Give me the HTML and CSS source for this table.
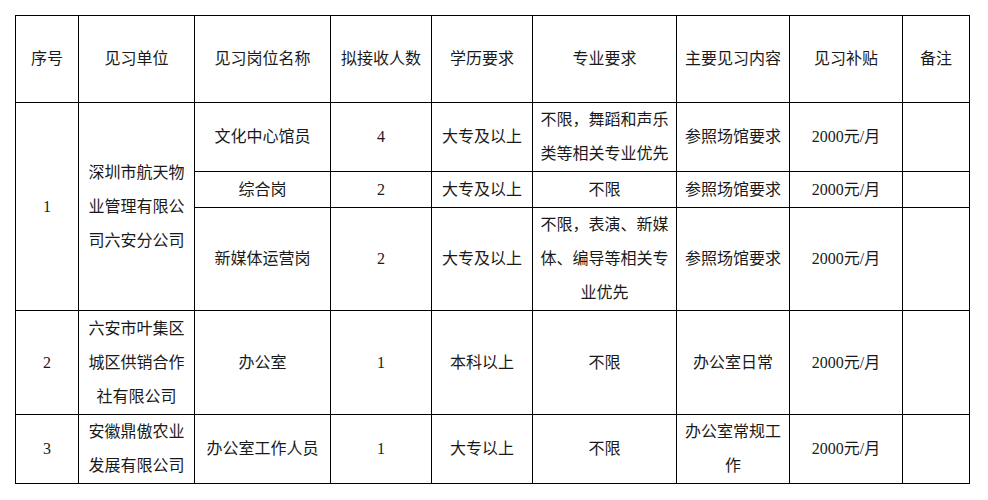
FILE: index.html
```html
<!DOCTYPE html>
<html lang="zh-CN">
<head>
<meta charset="utf-8">
<title>见习岗位</title>
<link rel="stylesheet" href="styles.css">
</head>
<body>
<table class="jobs">
  <colgroup>
    <col class="c1"><col class="c2"><col class="c3"><col class="c4"><col class="c5">
    <col class="c6"><col class="c7"><col class="c8"><col class="c9">
  </colgroup>
  <thead>
    <tr class="r-head">
      <th>序号</th><th>见习单位</th><th>见习岗位名称</th><th>拟接收人数</th><th>学历要求</th>
      <th>专业要求</th><th>主要见习内容</th><th>见习补贴</th><th>备注</th>
    </tr>
  </thead>
  <tbody>
    <tr class="r1a">
      <td rowspan="3">1</td>
      <td rowspan="3">深圳市航天物业管理有限公司六安分公司</td>
      <td>文化中心馆员</td><td>4</td><td>大专及以上</td>
      <td>不限，舞蹈和声乐类等相关专业优先</td><td>参照场馆要求</td><td>2000元/月</td><td></td>
    </tr>
    <tr class="r1b">
      <td>综合岗</td><td>2</td><td>大专及以上</td><td>不限</td><td>参照场馆要求</td><td>2000元/月</td><td></td>
    </tr>
    <tr class="r1c">
      <td>新媒体运营岗</td><td>2</td><td>大专及以上</td>
      <td>不限，表演、新媒体、编导等相关专业优先</td><td>参照场馆要求</td><td>2000元/月</td><td></td>
    </tr>
    <tr class="r2">
      <td>2</td><td>六安市叶集区城区供销合作社有限公司</td><td>办公室</td><td>1</td><td>本科以上</td>
      <td>不限</td><td>办公室日常</td><td>2000元/月</td><td></td>
    </tr>
    <tr class="r3">
      <td>3</td><td>安徽鼎傲农业发展有限公司</td><td>办公室工作人员</td><td>1</td><td>大专以上</td>
      <td>不限</td><td>办公室常规工作</td><td>2000元/月</td><td></td>
    </tr>
  </tbody>
</table>
</body>
</html>
```

FILE: styles.css
```css
html, body {
  margin: 0;
  padding: 0;
  background: #ffffff;
}

body {
  padding: 15px 0 0 15px;
  font-family: "Liberation Serif", "Noto Sans CJK SC", sans-serif;
  font-size: 16px;
  color: #1a1a1a;
}

.jobs {
  border-collapse: collapse;
  table-layout: fixed;
  width: 955px;
}

.jobs th,
.jobs td {
  border: 1px solid #000;
  padding: 0 3px;
  text-align: center;
  vertical-align: middle;
  line-height: 34px;
  font-weight: normal;
  overflow: hidden;
}

.c1 { width: 63px; }
.c2 { width: 116px; }
.c3 { width: 136px; }
.c4 { width: 101px; }
.c5 { width: 101px; }
.c6 { width: 144px; }
.c7 { width: 113px; }
.c8 { width: 113px; }
.c9 { width: 67px; }

.r-head { height: 87px; }
.r1a { height: 69px; }
.r1b { height: 36px; }
.r1c { height: 102px; }
.r2 { height: 104px; }
.r3 { height: 68px; }
```
